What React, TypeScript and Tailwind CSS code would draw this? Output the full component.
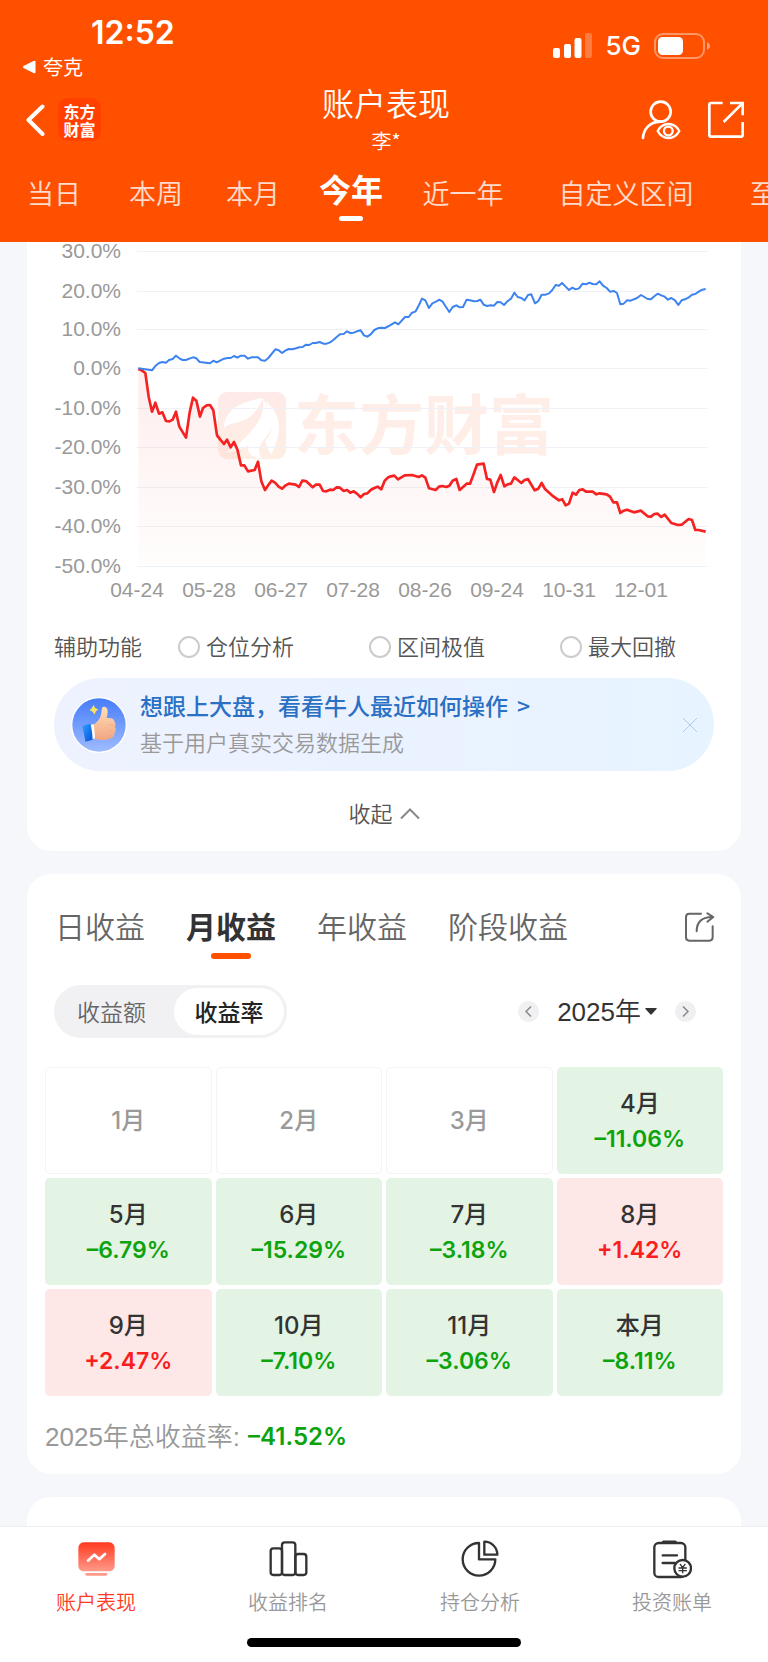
import { useState } from 'react';

const periods = [
  { name: '当日', width: 'w-[108px]' },
  { name: '本周', width: 'w-[96px]' },
  { name: '本月', width: 'w-[98px]' },
  { name: '今年', width: 'w-[98px]' },
  { name: '近一年', width: 'w-[126px]' },
  { name: '自定义区间', width: 'w-[200px]' },
  { name: '至今', width: 'w-[102px]' },
];

const gridLines = [
  { label: '30.0%', y: 9 },
  { label: '20.0%', y: 49 },
  { label: '10.0%', y: 87 },
  { label: '0.0%', y: 126 },
  { label: '-10.0%', y: 166 },
  { label: '-20.0%', y: 205 },
  { label: '-30.0%', y: 245 },
  { label: '-40.0%', y: 284 },
  { label: '-50.0%', y: 324 },
];

const dates = ['04-24', '05-28', '06-27', '07-28', '08-26', '09-24', '10-31', '12-01'];

const marketLine =
  '325,385 340,387 366,391 377,377 387,369 397,366 408,368 417,360 428,357 438,347 448,355 458,360 468,360 478,356 489,352 499,355 509,366 540,370 550,362 560,367 582,356 593,354 602,354 612,348 622,353 633,347 644,347 654,356 664,352 684,352 694,361 705,362 715,354 736,328 746,331 756,339 766,332 776,327 787,328 798,325 808,322 818,321 828,314 838,315 848,309 858,309 869,306 880,311 890,311 900,307 910,300 920,291 930,283 941,282 951,274 961,279 971,278 981,274 992,271 1002,286 1012,290 1022,283 1033,270 1043,265 1053,263 1065,264 1080,256 1095,247 1105,253 1125,231 1136,231 1145,219 1157,214 1167,195 1176,176 1186,181 1197,204 1207,190 1218,185 1228,179 1238,185 1248,201 1258,216 1268,201 1279,196 1289,202 1299,201 1310,179 1320,181 1332,184 1342,183 1351,179 1361,194 1371,198 1382,196 1392,197 1402,186 1412,187 1422,195 1432,184 1443,176 1453,158 1463,171 1474,174 1484,181 1494,165 1504,163 1515,190 1525,183 1535,164 1547,164 1557,160 1567,150 1577,135 1587,137 1596,129 1606,139 1617,150 1627,143 1637,148 1647,145 1658,131 1668,133 1678,128 1688,132 1699,133 1709,124 1719,137 1730,144 1740,155 1752,153 1761,159 1771,193 1781,191 1791,181 1802,182 1821,174 1833,165 1843,171 1853,177 1863,178 1873,169 1883,161 1894,166 1904,170 1914,179 1924,174 1935,181 1945,195 1955,181 1965,178 1975,173 1986,164 1996,162 2006,155 2017,149 2027,147';

const accountLine =
  '325,387 335,391 346,399 356,470 366,515 376,488 387,521 397,517 408,543 418,544 428,539 438,515 448,560 468,593 479,517 489,473 499,482 510,530 519,504 530,496 540,495 550,511 561,586 571,599 582,612 591,599 602,622 612,606 622,628 633,676 643,676 654,694 674,690 684,665 694,724 705,750 715,735 725,722 735,728 746,740 756,746 767,736 777,731 797,734 807,741 817,722 828,723 848,742 858,734 869,734 879,753 889,754 900,749 910,750 920,742 930,743 941,753 951,750 961,758 971,754 981,761 992,772 1002,762 1012,760 1022,750 1033,744 1043,740 1054,748 1064,722 1075,712 1083,709 1093,707 1104,718 1124,706 1146,705 1166,711 1176,706 1186,713 1197,745 1217,750 1227,740 1237,738 1249,741 1258,737 1268,722 1279,717 1289,750 1310,731 1320,731 1331,702 1341,674 1361,671 1371,717 1381,719 1392,756 1402,727 1412,705 1423,739 1433,733 1443,731 1453,712 1474,729 1484,720 1494,717 1514,751 1525,746 1535,729 1545,747 1566,766 1587,781 1597,778 1607,796 1617,791 1628,758 1638,764 1648,750 1658,748 1668,755 1688,755 1699,763 1709,760 1730,763 1740,770 1750,787 1761,787 1771,819 1781,812 1791,809 1812,817 1833,812 1853,829 1863,830 1873,822 1883,821 1894,831 1904,824 1924,849 1944,855 1955,854 1976,837 1986,840 1996,870 2006,870 2027,875';

const helpers = ['仓位分析', '区间极值', '最大回撤'];
const profitTabs = ['日收益', '月收益', '年收益', '阶段收益'];

const months = [
  { name: '1月', rate: '' },
  { name: '2月', rate: '' },
  { name: '3月', rate: '' },
  { name: '4月', rate: '–11.06%' },
  { name: '5月', rate: '–6.79%' },
  { name: '6月', rate: '–15.29%' },
  { name: '7月', rate: '–3.18%' },
  { name: '8月', rate: '+1.42%' },
  { name: '9月', rate: '+2.47%' },
  { name: '10月', rate: '–7.10%' },
  { name: '11月', rate: '–3.06%' },
  { name: '本月', rate: '–8.11%' },
];

const StatusBar = () => (
  <div className="flex h-[84px] items-start justify-between pt-[15px] pr-[58px] pl-[22px] text-white">
    <div>
      <div className="pl-[69px] font-['Inter',sans-serif] text-[32px] leading-[36px] font-semibold">12:52</div>
      <a href="#back" className="mt-[2px] flex items-center gap-[7px] text-[20px] leading-[28px] font-normal">
        <svg width="14" height="14" viewBox="0 0 14 14" fill="currentColor">
          <path d="M1.500 6 12 .8q1.500-.5 1.500 1v10.400q0 1.500-1.500 1L1.500 8q-1.300-1 0-2z" />
        </svg>
        夸克
      </a>
    </div>
    <div className="flex h-[62px] items-center gap-[13px]">
      <svg width="39" height="26" viewBox="0 0 39 26" fill="#fff">
        <rect x="0" y="15" width="7" height="10" rx="2" />
        <rect x="11" y="11" width="7" height="14" rx="2" />
        <rect x="21.500" y="5" width="7" height="20" rx="2" />
        <rect x="32" y="0" width="7" height="25" rx="2" opacity=".25" />
      </svg>
      <span className="font-['Inter',sans-serif] text-[26px] leading-[32px] font-medium">5G</span>
      <svg width="56" height="26" viewBox="0 0 56 26">
        <rect x="1" y="1" width="49" height="24" rx="8" fill="none" stroke="#fff" strokeOpacity=".4" strokeWidth="2" />
        <rect x="4" y="4" width="25" height="18" rx="4.500" fill="#fff" />
        <path d="M53 9q3 1.500 3 4t-3 4z" fill="#fff" fillOpacity=".45" />
      </svg>
    </div>
  </div>
);

const TitleBar = () => (
  <div className="grid grid-cols-[1fr_auto_1fr] items-center pr-[20px] pl-[24px] text-white">
    <div className="flex items-center gap-[12px]">
      <button type="button" aria-label="返回">
        <svg width="22" height="32" viewBox="0 0 22 32" fill="none" stroke="#fff" strokeWidth="4" strokeLinecap="round" strokeLinejoin="round">
          <path d="M18.500 2.500 4.500 16l14 14" />
        </svg>
      </button>
      <div className="flex size-[43px] flex-col items-center justify-center rounded-[10px] bg-[#ff4000] text-[16px] leading-[18px] font-bold">
        <span>东方</span>
        <span>财富</span>
      </div>
    </div>
    <div className="flex flex-col items-center gap-[7px]">
      <h1 className="text-[32px] leading-[36px]">账户表现</h1>
      <p className="text-[20px] leading-[28px]">李*</p>
    </div>
    <div className="flex justify-end gap-[24px]">
      <button type="button" aria-label="查看账户">
        <svg width="42" height="42" viewBox="0 0 126 126" fill="none" stroke="#fff" strokeWidth="8">
          <circle cx="62" cy="38" r="30" />
          <path d="M9 117C10 92 28 69 60 68" strokeLinecap="round" />
          <path d="M53 96C68 68 103 68 118 96 103 124 68 124 53 96z" strokeWidth="7" strokeLinejoin="round" />
          <circle cx="85" cy="96" r="13" strokeWidth="7" />
        </svg>
      </button>
      <button type="button" aria-label="分享">
        <svg width="42" height="42" viewBox="0 0 126 126" fill="none" stroke="#fff" strokeWidth="8">
          <path d="M50 12H15q-5 0-5 5v90q0 6 6 6h88q6 0 6-6V69" />
          <path d="M72 12h38v37M109 13 53 69" />
        </svg>
      </button>
    </div>
  </div>
);

const TrendChart = () => (
  <svg viewBox="0 0 714 369" className="block w-full" fontFamily="'Liberation Sans', sans-serif" fontSize="21" fill="#999">
    <defs>
      <linearGradient id="loss" x1="0" y1="387" x2="0" y2="975" gradientUnits="userSpaceOnUse">
        <stop offset="0" stopColor="#f52222" stopOpacity=".08" />
        <stop offset="1" stopColor="#f52222" stopOpacity=".01" />
      </linearGradient>
      <linearGradient id="mark" x1="0" y1="0" x2="0" y2="1">
        <stop offset="0" stopColor="#feeae8" />
        <stop offset="1" stopColor="#feeee3" />
      </linearGradient>
    </defs>

    {/* Watermark */}
    <rect x="191" y="150" width="68" height="67" rx="9" fill="url(#mark)" />
    <path d="M197 186C197 171 210 160 236 156 230 172 220 178 212 180 206 182 200 182 197 186z" fill="#fff" />
    <path d="M197 211C212 204 219 195 227 186 236 175 237 166 236 156 244 170 241 184 232 194 222 205 211 210 197 211z" fill="#fff" />
    <path d="M239 158C252 175 245 188 236 199 230 207 232 213 235 216 222 216 219 208 222 202 227 192 244 182 239 158z" fill="#fff" />
    <path d="M241 162C254 172 256 190 244 213 241 208 240 202 238 200 246 188 249 176 241 162z" fill="#fff" />
    <text x="267" y="207" fontFamily="'Noto Sans CJK SC', sans-serif" fontSize="65" fontWeight="700" fill="#feeee7">东方财富</text>

    {gridLines.map((line) => (
      <g key={line.label}>
        <line x1="110" x2="680" y1={line.y + 0.5} y2={line.y + 0.5} stroke="#f0f1f6" />
        <text x="94" y={line.y + 7} textAnchor="end">{line.label}</text>
      </g>
    ))}
    {dates.map((date, index) => (
      <text key={date} x={110 + index * 72} y="355" textAnchor="middle">{date}</text>
    ))}

    <g transform="translate(3 -2) scale(.33333)" fill="none" strokeLinejoin="round">
      <polygon points={`325,975 ${accountLine} 2027,975`} fill="url(#loss)" />
      <polyline points={accountLine} stroke="#f52222" strokeWidth="8" />
      <polyline points={marketLine} stroke="#3c82f0" strokeWidth="6" />
    </g>
  </svg>
);

const ThumbIcon = () => (
  <svg width="56" height="56" viewBox="0 0 168 168" className="shrink-0">
    <defs>
      <linearGradient id="sky" x1="0" y1="0" x2="0" y2="1">
        <stop offset="0" stopColor="#457cfa" />
        <stop offset="1" stopColor="#9fbcff" />
      </linearGradient>
      <linearGradient id="skin" x1="0" y1="0" x2="0" y2="1">
        <stop offset="0" stopColor="#ffe0b8" />
        <stop offset="1" stopColor="#f2a581" />
      </linearGradient>
      <linearGradient id="cuff" x1="0" y1="0" x2="1" y2="1">
        <stop offset="0" stopColor="#2fa0ff" />
        <stop offset="1" stopColor="#0650d8" />
      </linearGradient>
    </defs>
    <circle cx="84" cy="84" r="82" fill="url(#sky)" stroke="#fff" strokeWidth="4" />
    <path d="M66 84q16-10 22-24 3-9 4-22 1-10 8-9 10 2 10 15 0 10-3 19 22-2 23 9 6 8 2 18 5 9-1 17-1 14-12 17-9 6-24 5-18 0-29-6z" fill="url(#skin)" />
    <path d="M112 83h16M113 101h15M112 116h9" stroke="#f0ab84" strokeWidth="2" strokeLinecap="round" />
    <path d="m58 83 10-1q3 22 4 42l-9 3z" fill="#fff" />
    <path d="M34 87q12-6 25-6 5 22 6 47-11 3-22 6-2-15-9-47z" fill="url(#cuff)" />
    <path d="M67 24q3 9 15 14-10 4-11 15-5-10-15-14 9-5 11-15z" fill="#ffe25c" />
  </svg>
);

const ChartCard = () => (
  <section className="mx-[27px] rounded-b-[24px] bg-white pb-[20px]">
    <TrendChart />
    <div className="mt-[18px] flex items-center gap-[75px] px-[27px] text-[22px] leading-[32px] text-[#555]">
      <span className="-mr-[39px] pb-[3px]">辅助功能</span>
      {helpers.map((helper) => (
        <label key={helper} className="flex items-center gap-[6px]">
          <input type="radio" name="helper" className="size-[22px] appearance-none rounded-full border-2 border-[#ccc] checked:border-[7px] checked:border-[#ff5000]" />
          <span className="pb-[3px]">{helper}</span>
        </label>
      ))}
    </div>
    <div className="mx-[27px] mt-[14px] flex h-[93px] items-center rounded-full bg-linear-to-r from-[#eef2ff] via-[#ebf2ff] to-[#e7f4ff] pr-[16px] pl-[17px]">
      <ThumbIcon />
      <div className="ml-[13px] flex-1 pb-[3px]">
        <a href="#experts" className="flex gap-[9px] text-[23px] leading-[36px] font-medium text-[#2a70c4]">
          想跟上大盘，看看牛人最近如何操作
          <span>&gt;</span>
        </a>
        <p className="text-[22px] leading-[36px] text-[#999]">基于用户真实交易数据生成</p>
      </div>
      <button type="button" aria-label="关闭">
        <svg width="16" height="16" viewBox="0 0 16 16" stroke="#a9cbee" strokeWidth="1">
          <path d="m1 1 14 14M15 1 1 15" />
        </svg>
      </button>
    </div>
    <button type="button" className="mx-auto mt-[25px] flex items-center gap-[7px] text-[22px] leading-[32px] text-[#555]">
      <span className="pb-[3px]">收起</span>
      <svg width="20" height="13" viewBox="0 0 20 13" fill="none" stroke="#888" strokeWidth="2">
        <path d="m1 11.500 9-9 9 9" />
      </svg>
    </button>
  </section>
);

const ProfitCard = () => {
  const [tab, setTab] = useState('月收益');

  return (
    <section className="mx-[27px] mt-[23px] rounded-[24px] bg-white pt-[31px] pb-[19px]">
      <div className="flex items-start justify-between pr-[25px] pl-[28px]">
        <div className="flex gap-[41px]">
          {profitTabs.map((name) => (
            <button
              key={name}
              type="button"
              onClick={() => setTab(name)}
              className={name === tab ? 'flex h-[54px] flex-col items-center gap-[8px] text-[30px] leading-[40px] font-bold text-[#333]' : 'h-[40px] text-[30px] leading-[40px] text-[#666]'}
            >
              {name}
              {name === tab && <span className="h-[6px] w-[40px] shrink-0 rounded-full bg-[#ff5000]" />}
            </button>
          ))}
        </div>
        <button type="button" aria-label="分享收益" className="mt-[6px]">
          <svg width="32" height="32" viewBox="0 0 96 96" fill="none" stroke="#666" strokeWidth="6" strokeLinecap="round" strokeLinejoin="round">
            <path d="M51 8H16Q6 8 6 18v61q0 10 10 10h60q10 0 10-10V46" />
            <path d="M38 61c0-29 17-43 48-43M70 7l18 11-18 14" />
          </svg>
        </button>
      </div>

      <div className="mt-[26px] flex items-center justify-between pr-[45px] pl-[27px]">
        <div className="flex h-[53px] w-[233px] rounded-full bg-[#f1f1f4] p-[3px] text-[23px]">
          <button type="button" className="flex-1 pr-[8px] text-[#666]">收益额</button>
          <button type="button" className="w-[110px] rounded-full bg-white font-medium text-[#222]">收益率</button>
        </div>
        <div className="flex items-center gap-[18px] text-[#333]">
          <button type="button" aria-label="上一年" className="flex size-[21px] items-center justify-center rounded-full bg-[#f0f0f2]">
            <svg width="7" height="11" viewBox="0 0 7 11" fill="none" stroke="#888" strokeWidth="1.500"><path d="M6 .5 1 5.500l5 5" /></svg>
          </button>
          <button type="button" className="flex items-center gap-[4px] font-['Liberation_Sans','Noto_Sans_CJK_SC',sans-serif] text-[26px] leading-[36px]">
            2025年
            <svg width="12" height="7" viewBox="0 0 12 7" fill="currentColor"><path d="M.5 0h11q.5.500 0 1L7 6Q6 7 5 6L.5 1Q0 .5.500 0z" /></svg>
          </button>
          <button type="button" aria-label="下一年" className="flex size-[21px] items-center justify-center rounded-full bg-[#f0f0f2]">
            <svg width="7" height="11" viewBox="0 0 7 11" fill="none" stroke="#888" strokeWidth="1.500"><path d="m1 .5 5 5-5 5" /></svg>
          </button>
        </div>
      </div>

      {/* Months */}
      <div className="mt-[29px] grid auto-rows-[107px] grid-cols-4 gap-[4px] px-[18px] font-['Inter','Noto_Sans_CJK_SC',sans-serif] font-medium">
        {months.map(({ name, rate }) => {
          const up = rate.startsWith('+');
          if (!rate) {
            return (
              <div key={name} className="flex items-center justify-center rounded-[5px] border border-[#f4f4f4] text-[24px] text-[#999]">
                {name}
              </div>
            );
          }
          return (
            <div key={name} className={`flex flex-col items-center justify-center rounded-[5px] ${up ? 'bg-[#fde7e7]' : 'bg-[#e3f4e4]'}`}>
              <span className="text-[24px] leading-[36px] text-[#333]">{name}</span>
              <span className={`text-[23px] leading-[34px] font-semibold ${up ? 'text-[#fa1e1e]' : 'text-[#0ca30c]'}`}>{rate}</span>
            </div>
          );
        })}
      </div>

      <p className="mt-[23px] flex gap-[8px] px-[18px] font-['Liberation_Sans','Noto_Sans_CJK_SC',sans-serif] text-[26px] leading-[36px] text-[#999]">
        2025年总收益率:
        <span className="font-['Inter',sans-serif] text-[24px] font-semibold text-[#0ca30c]">–41.52%</span>
      </p>
    </section>
  );
};

const TabBar = () => {
  const items = [
    {
      name: '账户表现',
      icon: (
        <>
          <defs>
            <linearGradient id="screen" x1="0" y1="0" x2="0" y2="1">
              <stop offset="0" stopColor="#ff3a1f" />
              <stop offset="1" stopColor="#ff9a8b" />
            </linearGradient>
          </defs>
          <rect x="7" y="10" width="109" height="87" rx="16" fill="url(#screen)" stroke="none" />
          <path d="m36 65 19-18 15 14 17-16" stroke="#fff" strokeWidth="8" />
          <path d="M32 106h58" stroke="#ff9a8b" strokeWidth="8" />
        </>
      ),
    },
    {
      name: '收益排名',
      icon: (
        <>
          <rect x="8" y="28" width="34" height="80" rx="8" />
          <rect x="42" y="10" width="40" height="98" rx="8" />
          <rect x="82" y="45" width="33" height="63" rx="8" />
        </>
      ),
    },
    {
      name: '持仓分析',
      icon: (
        <>
          <path d="M57 12a49 49 0 1 0 49 49H57z" />
          <path d="M73 8v39h39A39 39 0 0 0 73 8z" />
        </>
      ),
    },
    {
      name: '投资账单',
      icon: (
        <>
          <rect x="7" y="12" width="93" height="102" rx="13" />
          <path d="M34 9h36" strokeWidth="9" />
          <path d="M32 49h43M32 72h36" strokeWidth="7" />
          <circle cx="92" cy="88" r="25" fill="#fff" />
          <path d="m85 76 7 10 7-10M92 86v15M81 87h22M81 95h22" strokeWidth="4" />
        </>
      ),
    },
  ];

  return (
    <nav className="border-t border-[#f0f0f2] bg-white pt-[12px] pb-[15px]">
      <div className="grid grid-cols-4">
        {items.map((item, index) => (
          <a key={item.name} href={`#tab-${index}`} className="flex flex-col items-center gap-[9px]">
            <svg width="40" height="40" viewBox="0 0 120 120" fill="none" stroke="#333" strokeWidth="7" strokeLinecap="round" strokeLinejoin="round">
              {item.icon}
            </svg>
            <span className={`text-[20px] leading-[28px] ${index === 0 ? 'text-[#ff3a1f]' : 'text-[#999]'}`}>{item.name}</span>
          </a>
        ))}
      </div>
      <div className="mx-auto mt-[22px] h-[9px] w-[274px] rounded-full bg-black" />
    </nav>
  );
};

export default function App() {
  const [period, setPeriod] = useState('今年');

  return (
    <div className="flex min-h-screen flex-col bg-[#f6f7fa] font-['Noto_Sans_CJK_SC',sans-serif] font-[350]">
      <header className="bg-[#ff5000]">
        <StatusBar />
        <TitleBar />
        <div className="flex h-[87px] items-start overflow-hidden text-white">
          {periods.map(({ name, width }) => (
            <button
              key={name}
              type="button"
              onClick={() => setPeriod(name)}
              className={`flex shrink-0 flex-col items-center leading-[38px] whitespace-nowrap ${width} ${name === period ? 'gap-[9px] pt-[14px] text-[32px] font-bold' : 'pt-[19px] text-[27px] text-white/80'}`}
            >
              {name}
              {name === period && <span className="h-[5px] w-[24px] rounded-full bg-white" />}
            </button>
          ))}
        </div>
      </header>
      <main className="flex flex-1 flex-col">
        <ChartCard />
        <ProfitCard />
        <section className="mx-[27px] mt-[23px] min-h-[29px] flex-1 rounded-t-[24px] bg-white" />
      </main>
      <TabBar />
    </div>
  );
}
